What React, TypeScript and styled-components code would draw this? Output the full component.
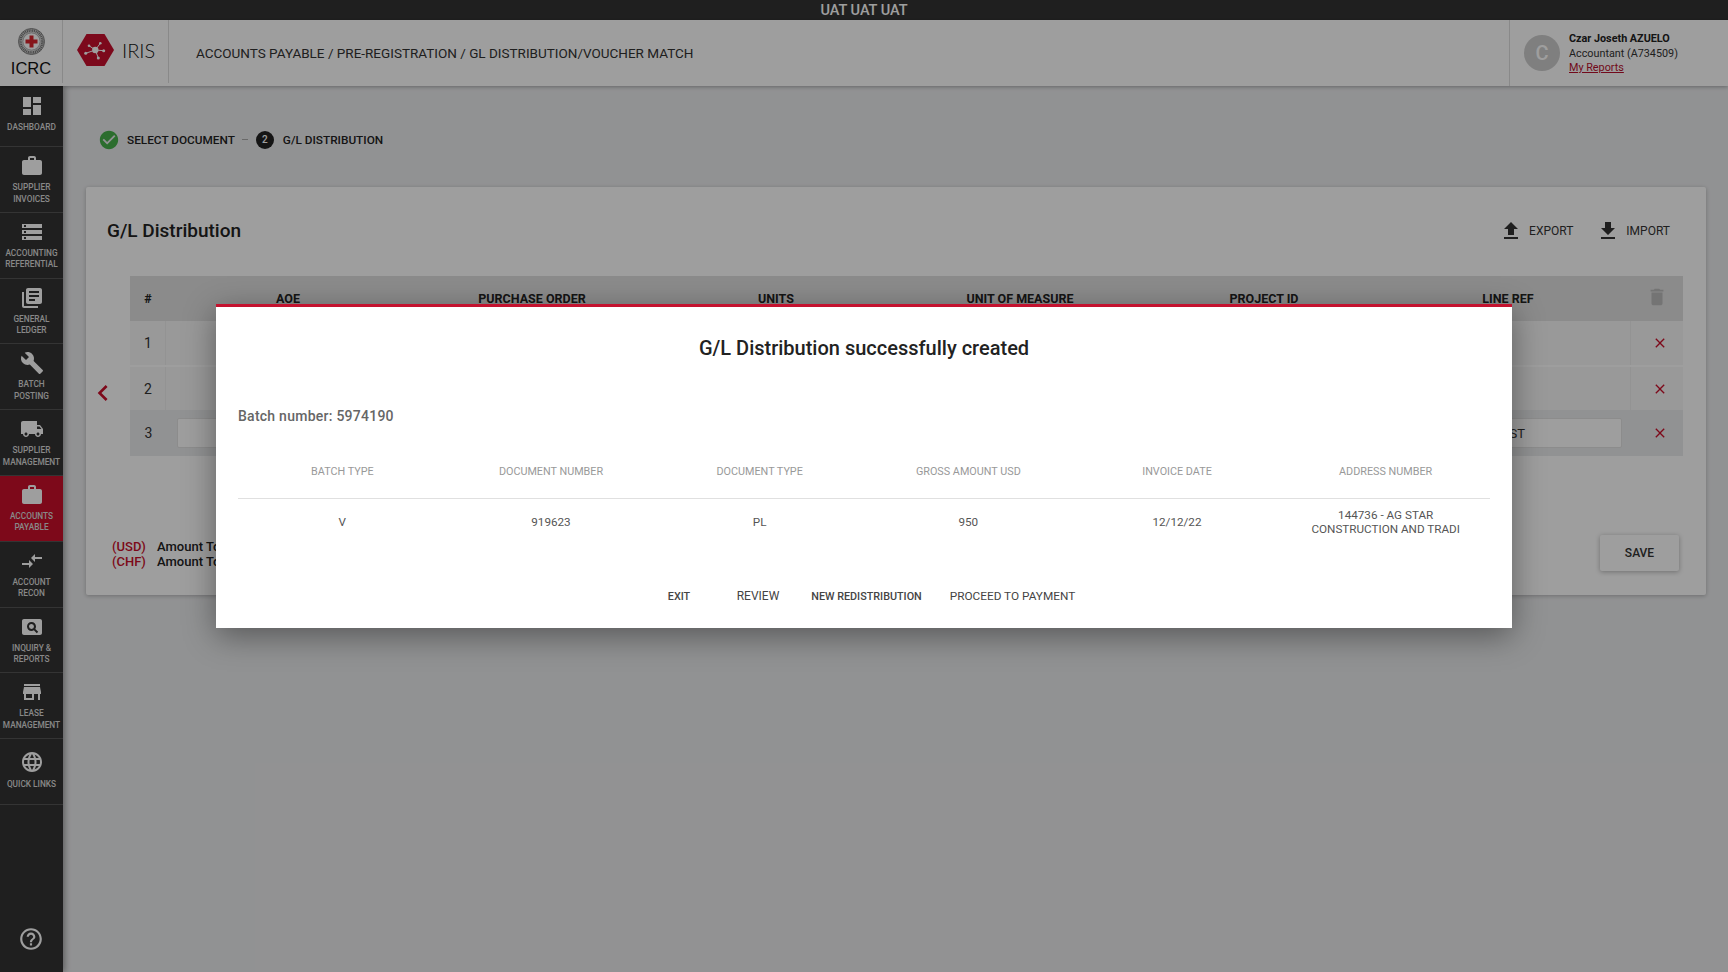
import * as React from "react"
import styled, {createGlobalStyle} from "styled-components"
import {
  MdDashboard, MdWork, MdStorage, MdLibraryBooks, MdBuild, MdLocalShipping,
  MdCompareArrows, MdPageview, MdStore, MdLanguage, MdHelpOutline, MdFileUpload,
  MdFileDownload, MdDelete, MdClose, MdChevronLeft, MdCheckCircle
} from "react-icons/md"
import type {IconType} from "react-icons"

const Global = createGlobalStyle`
  html, body { margin: 0; padding: 0; height: 100%; overflow: hidden; }
  body { font-family: Roboto, "Liberation Sans", sans-serif; background: #ebecee; }
`

const Page = styled.div`
  position: relative;
  width: 1728px;
  height: 972px;
  display: flex;
  flex-direction: column;
  overflow: hidden;
`

const EnvBar = styled.div`
  height: 20px;
  flex: none;
  background: #333;
  color: #fff;
  font-size: 14.5px;
  font-weight: 500;
  line-height: 22px;
  text-align: center;
`

const Header = styled.header`
  height: 66px;
  flex: none;
  display: flex;
  align-items: stretch;
  background: #fff;
  box-shadow: 0 1px 4px rgba(0,0,0,.3);
  z-index: 2;
`

const HeaderCell = styled.div<{$width: number}>`
  width: ${p => p.$width}px;
  flex: none;
  box-sizing: border-box;
  margin-bottom: 3px;
  border-right: 1px solid #ddd;
`

const IcrcCell = styled(HeaderCell)`
  display: flex;
  flex-direction: column;
  align-items: center;
  padding-top: 8px;
`

const IcrcText = styled.div`
  font-family: "Liberation Sans", sans-serif;
  font-size: 16.5px;
  line-height: 20px;
  margin-top: 3px;
  color: #111;
`

const IrisCell = styled(HeaderCell)`
  display: flex;
  align-items: center;
  gap: 8px;
  padding: 0 0 3px 14px;
`

const IrisText = styled.div`
  font-family: Lato, Roboto, sans-serif;
  font-weight: 300;
  font-size: 20px;
  color: #111;
`

const Breadcrumb = styled.div`
  flex: 1;
  padding-left: 27px;
  line-height: 66px;
  font-size: 13.5px;
  color: #333;
`

const UserCell = styled.div`
  width: 219px;
  flex: none;
  box-sizing: border-box;
  border-left: 1px solid #ddd;
  display: flex;
  align-items: center;
  gap: 9px;
  padding: 0 0 0 14px;
`

const Avatar = styled.div`
  width: 36px;
  height: 36px;
  border-radius: 50%;
  background: #cdcdcd;
  color: #fff;
  font-size: 20px;
  font-weight: 500;
  line-height: 36px;
  text-align: center;
`

const UserInfo = styled.div`
  font-size: 10.8px;
  line-height: 14.5px;
  color: #333;
  padding-top: 2px;
`

const UserName = styled.div`
  font-weight: 700;
  color: #222;
`

const ReportsLink = styled.a`
  color: #b8102e;
  text-decoration: underline;
  display: block;
`

const Body = styled.div`
  flex: 1;
  display: flex;
  min-height: 0;
`

const Sidebar = styled.nav`
  width: 63px;
  flex: none;
  background: #333;
  display: flex;
  flex-direction: column;
  box-shadow: 2px 0 6px rgba(0,0,0,.35);
  z-index: 1;
`

const NavItem = styled.div<{$active?: boolean; $first?: boolean; $inset: number}>`
  height: ${p => (p.$first ? 61 : 65.8)}px;
  flex: none;
  box-sizing: border-box;
  padding-top: ${p => p.$inset}px;
  background: ${p => (p.$active ? "#ca0f2b" : "transparent")};
  border-bottom: 1px solid #555;
  color: #fff;
  display: flex;
  flex-direction: column;
  align-items: center;
`

const NavLabel = styled.div<{$gap: number}>`
  font-size: 8.3px;
  font-weight: 500;
  line-height: 11.5px;
  text-align: center;
  white-space: pre-line;
  color: #dcdcdc;
  margin-top: ${p => p.$gap}px;
`

const HelpButton = styled.div`
  margin-top: auto;
  height: 66px;
  flex: none;
  display: flex;
  justify-content: center;
  color: #fff;
  padding: 20px 2px 0 0;
  box-sizing: border-box;
`

const Main = styled.main`
  flex: 1;
  padding: 0 22px 0 23px;
  min-width: 0;
`

const Stepper = styled.div`
  height: 101px;
  box-sizing: border-box;
  padding: 6px 0 0 12px;
  display: flex;
  align-items: center;
  font-size: 11.8px;
  font-weight: 500;
  color: #222;
`

const StepDash = styled.span`
  width: 6px;
  height: 1px;
  background: #aaa;
  margin: 0 8px 0 7px;
`

const StepNumber = styled.span`
  width: 18px;
  height: 18px;
  border-radius: 50%;
  background: #222;
  color: #fff;
  font-size: 10px;
  line-height: 18px;
  text-align: center;
  margin-right: 9px;
`

const StepCheck = styled(MdCheckCircle)`
  color: #47b04b;
  margin-right: 7px;
`

const Card = styled.section`
  position: relative;
  height: 408px;
  box-sizing: border-box;
  background: #fff;
  border-radius: 2px;
  box-shadow: 0 1px 4px rgba(0,0,0,.25);
  padding: 0 23px 0 21px;
`

const CardHead = styled.div`
  height: 89px;
  box-sizing: border-box;
  padding-bottom: 2px;
  display: flex;
  align-items: center;
`

const CardTitle = styled.h2`
  margin: 0;
  flex: 1;
  font-size: 19px;
  font-weight: 500;
  color: #222;
`

const ActionLink = styled.div`
  display: flex;
  align-items: center;
  gap: 6px;
  margin-left: 23px;
  font-size: 12px;
  color: #333;
  &:last-child { margin-right: 13px; }
`

const TableWrap = styled.div`
  position: relative;
  margin-left: 23px;
`

const BackArrow = styled(MdChevronLeft)`
  position: absolute;
  left: -43px;
  top: 101px;
  color: #ca0f2b;
`

const GridRow = styled.div<{$height: number; $bg: string; $gap?: number}>`
  display: grid;
  grid-template-columns: 36px repeat(6, 244px) 53px;
  height: ${p => p.$height}px;
  background: ${p => p.$bg};
  margin-bottom: ${p => p.$gap ?? 0}px;
  font-size: 14px;
  color: #333;
`

const HeadCell = styled.div`
  display: flex;
  align-items: center;
  justify-content: center;
  padding-bottom: 1px;
  font-size: 12.5px;
  font-weight: 700;
  color: #222;
`

const TrashCell = styled.div`
  display: flex;
  justify-content: center;
  padding-top: 10px;
  color: #bcbcbc;
`

const IndexCell = styled.div<{$divided?: boolean}>`
  display: flex;
  align-items: center;
  justify-content: center;
  padding-left: 1px;
  border-right: ${p => (p.$divided ? "1px solid #eee" : "none")};
`

const FillCell = styled.div<{$span: number}>`
  grid-column: span ${p => p.$span};
`

const RemoveCell = styled.div<{$divided?: boolean}>`
  display: flex;
  align-items: center;
  justify-content: center;
  padding-left: 6px;
  color: #ca0f2b;
  border-left: ${p => (p.$divided ? "1px solid #eee" : "none")};
`

const InputCell = styled.div`
  grid-column: span 6;
  padding: 8px 8px 8px 11px;
`

const FakeInput = styled.div`
  height: 30px;
  box-sizing: border-box;
  background: #fff;
  border: 1px solid #e2e2e2;
  border-radius: 2px;
  display: flex;
  align-items: center;
  justify-content: flex-end;
  padding-right: 96px;
  font-size: 13px;
  color: #333;
`

const Totals = styled.div`
  position: absolute;
  left: 26px;
  bottom: 26px;
  display: grid;
  grid-template-columns: 45px auto;
  font-size: 13px;
  font-weight: 500;
  line-height: 15px;
  color: #222;
`

const Currency = styled.span`
  color: #ca0f2b;
`

const SaveButton = styled.button`
  position: absolute;
  right: 27px;
  bottom: 24px;
  width: 79px;
  height: 36px;
  border: none;
  border-radius: 2px;
  background: #fff;
  font-family: inherit;
  font-size: 12px;
  font-weight: 500;
  color: #333;
  box-shadow: 0 1px 5px rgba(0,0,0,.3);
`

const Overlay = styled.div`
  position: absolute;
  inset: 0;
  z-index: 10;
  background: rgba(0,0,0,.38);
  display: flex;
  justify-content: center;
  padding-top: 304px;
  box-sizing: border-box;
`

const Modal = styled.div`
  width: 1296px;
  height: 324px;
  box-sizing: border-box;
  background: #fff;
  border-top: 3px solid #c4122f;
  box-shadow: 0 8px 30px rgba(0,0,0,.4);
  padding: 0 22px;
  display: flex;
  flex-direction: column;
`

const ModalTitle = styled.h2`
  margin: 0;
  height: 83px;
  line-height: 83px;
  text-align: center;
  font-size: 20px;
  font-weight: 500;
  color: #222;
`

const BatchNumber = styled.div`
  margin-top: 16px;
  font-size: 14px;
  font-weight: 500;
  letter-spacing: .25px;
  line-height: 20px;
  color: #666;
`

const SummaryRow = styled.div<{$height: number; $head?: boolean}>`
  display: grid;
  grid-template-columns: repeat(6, 1fr);
  align-items: center;
  text-align: center;
  height: ${p => p.$height}px;
  margin-top: ${p => (p.$head ? 19 : 0)}px;
  border-bottom: ${p => (p.$head ? "1px solid #e0e0e0" : "none")};
  font-size: ${p => (p.$head ? 10.8 : 11.7)}px;
  line-height: 14px;
  color: ${p => (p.$head ? "#999" : "#555")};
`

const ModalActions = styled.div`
  display: flex;
  justify-content: center;
  align-items: center;
  margin-top: 45px;
  padding-left: 17px;
`

const TextButton = styled.button<{$size: number; $width: number}>`
  width: ${p => p.$width}px;
  padding: 0;
  border: none;
  background: none;
  font-family: inherit;
  font-size: ${p => p.$size}px;
  font-weight: ${p => (p.$size < 11.5 ? 500 : 400)};
  color: #444;
  white-space: nowrap;
  text-align: center;
`

const IcrcEmblem = () => (
  <svg width="27" height="27" viewBox="0 0 27 27">
    <circle cx="13.5" cy="13.5" r="13" fill="#ddd" stroke="#666" strokeWidth=".8" />
    <circle cx="13.5" cy="13.5" r="11" fill="none" stroke="#777" strokeWidth="2.6" strokeDasharray="1.1 .7" />
    <circle cx="13.5" cy="13.5" r="8.6" fill="#fff" stroke="#777" strokeWidth=".5" />
    <path d="M11.5 7.5h4v4h4v4h-4v4h-4v-4h-4v-4h4z" fill="#d8242c" />
  </svg>
)

const IrisLogo = () => (
  <svg width="37" height="32" viewBox="0 0 37 32">
    <path d="M9.5 0h18L37 16l-9.5 16h-18L0 16z" fill="#c8102e" />
    <g stroke="#fff" strokeWidth="1">
      <path d="M18.3 16L8.7 19.3M18.3 16L12 11.7M18.3 16L23.3 9.3M18.3 16L26.7 16.7M18.3 16L21.3 24" />
    </g>
    <g fill="#fff">
      <circle cx="18.3" cy="16" r="3.2" />
      <circle cx="8.7" cy="19.3" r="1.5" />
      <circle cx="12" cy="11.7" r="1.3" />
      <circle cx="23.3" cy="9.3" r="1.3" />
      <circle cx="26.7" cy="16.7" r="1.5" />
      <circle cx="21.3" cy="24" r="1.5" />
    </g>
  </svg>
)

interface NavEntry {
  label: string
  icon: IconType
  active?: boolean
  inset?: number
  gap?: number
}

const navEntries: NavEntry[] = [
  {label: "DASHBOARD", icon: MdDashboard, inset: 8},
  {label: "SUPPLIER\nINVOICES", icon: MdWork},
  {label: "ACCOUNTING\nREFERENTIAL", icon: MdStorage},
  {label: "GENERAL\nLEDGER", icon: MdLibraryBooks},
  {label: "BATCH\nPOSTING", icon: MdBuild},
  {label: "SUPPLIER\nMANAGEMENT", icon: MdLocalShipping},
  {label: "ACCOUNTS\nPAYABLE", icon: MdWork, active: true},
  {label: "ACCOUNT\nRECON", icon: MdCompareArrows},
  {label: "INQUIRY &\nREPORTS", icon: MdPageview},
  {label: "LEASE\nMANAGEMENT", icon: MdStore},
  {label: "QUICK LINKS", icon: MdLanguage, inset: 11, gap: 5}
]

const columns = ["AOE", "PURCHASE ORDER", "UNITS", "UNIT OF MEASURE", "PROJECT ID", "LINE REF"]

const summaryHeads = ["BATCH TYPE", "DOCUMENT NUMBER", "DOCUMENT TYPE", "GROSS AMOUNT USD", "INVOICE DATE", "ADDRESS NUMBER"]

const summaryValues = ["V", "919623", "PL", "950", "12/12/22"]

export default function App() {
  return (
    <Page>
      <Global />
      <EnvBar>UAT UAT UAT</EnvBar>
      <Header>
        <IcrcCell $width={63}>
          <IcrcEmblem />
          <IcrcText>ICRC</IcrcText>
        </IcrcCell>
        <IrisCell $width={106}>
          <IrisLogo />
          <IrisText>IRIS</IrisText>
        </IrisCell>
        <Breadcrumb>ACCOUNTS PAYABLE / PRE-REGISTRATION / GL DISTRIBUTION/VOUCHER MATCH</Breadcrumb>
        <UserCell>
          <Avatar>C</Avatar>
          <UserInfo>
            <UserName>Czar Joseth AZUELO</UserName>
            <div>Accountant (A734509)</div>
            <ReportsLink>My Reports</ReportsLink>
          </UserInfo>
        </UserCell>
      </Header>
      <Body>
        <Sidebar>
          {navEntries.map((entry, i) => (
            <NavItem key={entry.label} $active={entry.active} $first={i === 0} $inset={entry.inset ?? 7}>
              <entry.icon size={24} />
              <NavLabel $gap={entry.gap ?? 4}>{entry.label}</NavLabel>
            </NavItem>
          ))}
          <HelpButton><MdHelpOutline size={26} /></HelpButton>
        </Sidebar>
        <Main>
          <Stepper>
            <StepCheck size={22} />
            <span>SELECT DOCUMENT</span>
            <StepDash />
            <StepNumber>2</StepNumber>
            <span>G/L DISTRIBUTION</span>
          </Stepper>
          <Card>
            <CardHead>
              <CardTitle>G/L Distribution</CardTitle>
              <ActionLink><MdFileUpload size={24} />EXPORT</ActionLink>
              <ActionLink><MdFileDownload size={24} />IMPORT</ActionLink>
            </CardHead>
            <TableWrap>
              <BackArrow size={32} />
              <GridRow $height={45} $bg="#e0e0e0">
                <HeadCell>#</HeadCell>
                {columns.map(c => <HeadCell key={c}>{c}</HeadCell>)}
                <TrashCell><MdDelete size={22} /></TrashCell>
              </GridRow>
              <GridRow $height={44} $bg="#f7f7f7" $gap={2}>
                <IndexCell $divided>1</IndexCell>
                <FillCell $span={6} />
                <RemoveCell $divided><MdClose size={16} /></RemoveCell>
              </GridRow>
              <GridRow $height={43} $bg="#f7f7f7">
                <IndexCell $divided>2</IndexCell>
                <FillCell $span={6} />
                <RemoveCell $divided><MdClose size={16} /></RemoveCell>
              </GridRow>
              <GridRow $height={46} $bg="#ebecee">
                <IndexCell>3</IndexCell>
                <InputCell><FakeInput>ST</FakeInput></InputCell>
                <RemoveCell><MdClose size={16} /></RemoveCell>
              </GridRow>
            </TableWrap>
            <Totals>
              <Currency>(USD)</Currency><span>Amount To</span>
              <Currency>(CHF)</Currency><span>Amount To</span>
            </Totals>
            <SaveButton>SAVE</SaveButton>
          </Card>
        </Main>
      </Body>
      <Overlay>
        <Modal>
          <ModalTitle>G/L Distribution successfully created</ModalTitle>
          <BatchNumber>Batch number: 5974190</BatchNumber>
          <SummaryRow $height={53} $head>
            {summaryHeads.map(h => <div key={h}>{h}</div>)}
          </SummaryRow>
          <SummaryRow $height={45}>
            {summaryValues.map(v => <div key={v}>{v}</div>)}
            <div>144736 - AG STAR<br />CONSTRUCTION AND TRADI</div>
          </SummaryRow>
          <ModalActions>
            <TextButton $size={10.8} $width={63}>EXIT</TextButton>
            <TextButton $size={12} $width={95}>REVIEW</TextButton>
            <TextButton $size={10.8} $width={122}>NEW REDISTRIBUTION</TextButton>
            <TextButton $size={11.8} $width={170}>PROCEED TO PAYMENT</TextButton>
          </ModalActions>
        </Modal>
      </Overlay>
    </Page>
  )
}
